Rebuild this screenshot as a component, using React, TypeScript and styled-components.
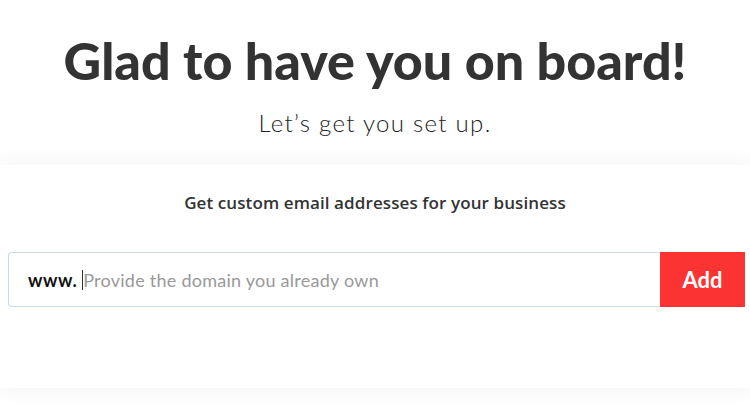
import styled, { createGlobalStyle } from 'styled-components';

const GlobalStyle = createGlobalStyle`
  html, body {
    margin: 0;
    padding: 0;
    background: #ffffff;
    font-family: Lato, "Open Sans", sans-serif;
    color: #333333;
  }
`;

const App = () => {
  return (
    <>
      <GlobalStyle />
      <Page>
        <Hero>
          <Title>Glad to have you on board!</Title>
          <Subtitle>Let’s get you set up.</Subtitle>
        </Hero>
        <Card>
          <CardTitle>Get custom email addresses for your business</CardTitle>
          <DomainForm>
            <InputBox>
              <Prefix>www.</Prefix>
              <Caret />
              <DomainInput placeholder="Provide the domain you already own" />
            </InputBox>
            <AddButton type="button">Add</AddButton>
          </DomainForm>
        </Card>
      </Page>
    </>
  );
};

const Page = styled.div`
  width: 750px;
  height: 420px;
  overflow: hidden;
  display: flex;
  flex-direction: column;
`;

const Hero = styled.header`
  display: flex;
  flex-direction: column;
  align-items: center;
  height: 165px;
  padding-top: 28px;
  box-sizing: border-box;
`;

const Title = styled.h1`
  margin: 0;
  font-size: 52px;
  font-weight: 900;
  line-height: 64px;
  color: #333333;
`;

const Subtitle = styled.p`
  margin: 16px 0 0;
  font-size: 24px;
  font-weight: 300;
  line-height: 30px;
  letter-spacing: 1.3px;
  color: #222222;
`;

const Card = styled.section`
  display: flex;
  flex-direction: column;
  align-items: center;
  height: 223px;
  background: #ffffff;
  box-shadow: 0 0 22px rgba(0, 0, 0, 0.06);
  padding-top: 28px;
  box-sizing: border-box;
`;

const CardTitle = styled.h2`
  margin: 0;
  font-family: "Open Sans", Lato, sans-serif;
  font-size: 17px;
  font-weight: 600;
  line-height: 20px;
  letter-spacing: 0.1px;
  color: #333333;
`;

const DomainForm = styled.div`
  display: flex;
  align-self: stretch;
  margin: 39px 5px 0 8px;
  height: 55px;
`;

const InputBox = styled.label`
  flex: 1;
  display: flex;
  align-items: center;
  padding-left: 19px;
  border: 1px solid #c9dce9;
  border-right: none;
  border-radius: 4px 0 0 4px;
  background: #ffffff;
`;

const Prefix = styled.span`
  font-size: 18px;
  font-weight: 700;
  letter-spacing: 0.5px;
  color: #111111;
`;

const Caret = styled.span`
  width: 1px;
  height: 20px;
  margin-left: 5px;
  background: #333333;
`;

const DomainInput = styled.input`
  flex: 1;
  border: none;
  outline: none;
  padding: 0;
  font-family: Lato, "Open Sans", sans-serif;
  font-size: 18px;
  letter-spacing: 0.25px;
  color: #333333;
  background: transparent;

  &::placeholder {
    color: #999999;
  }
`;

const AddButton = styled.button`
  width: 85px;
  border: none;
  background: #fb3333;
  color: #ffffff;
  font-family: Lato, "Open Sans", sans-serif;
  font-size: 22px;
  font-weight: 700;
  cursor: pointer;
`;

export default App;
